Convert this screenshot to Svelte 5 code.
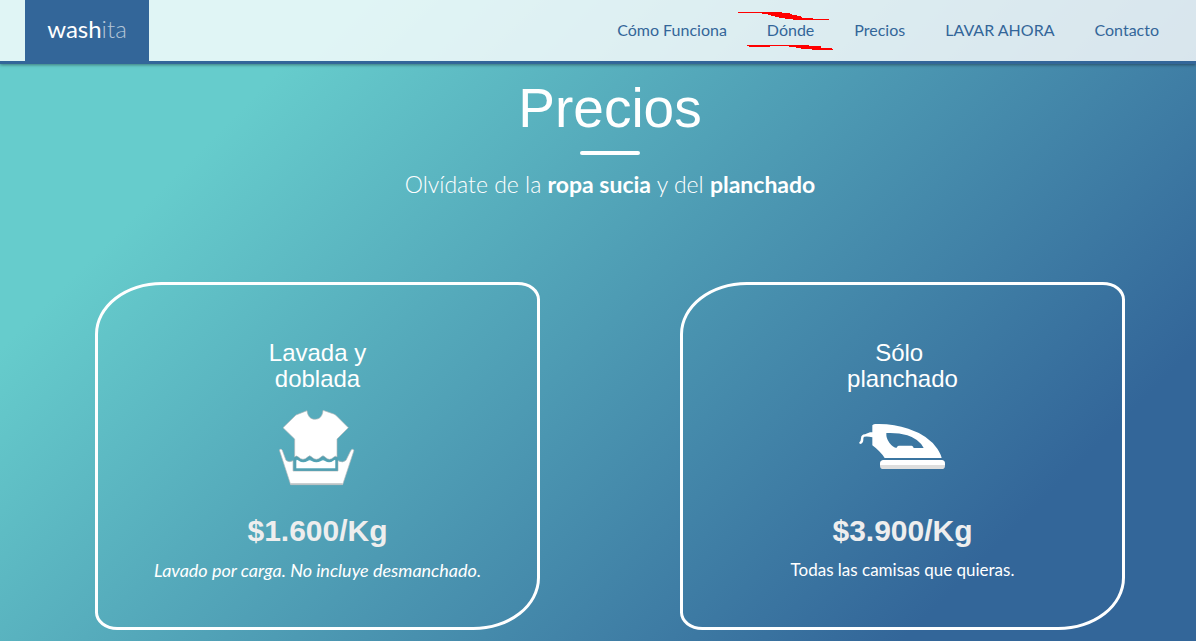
<script>
  const links = [
    { label: 'Cómo Funciona', href: '#como-funciona' },
    { label: 'Dónde', href: '#donde', marked: true },
    { label: 'Precios', href: '#precios' },
    { label: 'LAVAR AHORA', href: '#lavar' },
    { label: 'Contacto', href: '#contacto' }
  ];

  const plans = [
    { icon: 'wash', title: ['Lavada y', 'doblada'], price: '$1.600/Kg', note: 'Lavado por carga. No incluye desmanchado.', italic: true },
    { icon: 'iron', title: ['Sólo\u00a0', 'planchado'], price: '$3.900/Kg', note: 'Todas las camisas que quieras.', italic: false }
  ];
</script>

<div class="page">
  <header>
    <a class="logo" href="#inicio"><span>wash</span><span class="soft">ita</span></a>
    <nav>
      {#each links as link}
        <a href={link.href}>
          {link.label}
          {#if link.marked}
            <svg class="marks" viewBox="738 12 95 38" width="95" height="38" fill="#f00" shape-rendering="crispEdges" aria-hidden="true">
              <path d="M738 12H782V13H790V14H792V15H797V16H801V17H802V18H813V19H829V20H793V19H785V18H779V17H775V16H771V15H768V14H762V13H738Z" />
              <path d="M747 45H809V46H821V48H832V49H833V50H812V49H801V48H796V47H789V46H770V47H749V46H747Z" />
            </svg>
          {/if}
        </a>
      {/each}
    </nav>
  </header>

  <main id="precios">
    <h1>Precios</h1>
    <div class="rule"></div>
    <p class="lead">Olvídate de la <strong>ropa sucia</strong> y del <strong>planchado</strong></p>

    <div class="plans">
      {#each plans as plan}
        <section class="card">
          <h2>{plan.title[0]}<br />{plan.title[1]}</h2>
          <div class="icon">
            {#if plan.icon === 'wash'}
              <svg viewBox="54 57 231 231" width="77" height="77" aria-hidden="true">
                <g fill="#fff" stroke="#b4b8ba" stroke-width="2" stroke-linejoin="round">
                  <path d="M58 180Q63 174 67 181L78 211Q86 219 99 212V243H234V212Q248 220 258 211L272 182Q277 174 282 181L248 284H92Z" />
                  <path d="M141 62C143 78 151 88 165 88S188 78 189 61L221 72Q226 74 229 77L265 113L231 147V201Q227 196 222 201Q208 215 195 201Q189 194 183 201Q169 215 155 201Q149 194 143 201Q129 215 115 201Q109 195 104 201V147L69 113L108 75Z" />
                </g>
                <path fill="#fff" d="M109 211Q113 209 116 212Q129 221 143 213Q149 208 155 213Q169 221 183 213Q189 208 195 213Q208 221 220 212Q223 209 226 211V235H109Z" />
                <path fill="none" stroke="#549fb0" stroke-width="5" d="M105 205V240H230V205M104 206Q109 200 115 206Q129 219 143 206Q149 200 155 206Q169 219 183 206Q189 200 195 206Q208 219 222 206Q227 201 230 205" />
                <path d="M92 282H248" stroke="#b9bfc2" stroke-width="4" />
              </svg>
            {:else}
              <svg viewBox="54 69 264 147" width="88" height="49" aria-hidden="true">
                <path fill="#fff" fill-rule="evenodd" d="M97 76Q99 73 105 72Q159 70 205 86Q265 106 292 146Q303 163 305 174H134Q121 154 97 136V112L88 110Q80 109 73 110Q69 112 70 119Q70 129 61 132Q56 131 58 127Q63 123 63 115Q63 104 75 103L90 97H97ZM139 99Q138 115 148 128Q159 142 167 143H170Q171 139 176 137H215Q220 138 221 144H251Q237 117 202 106Q173 97 139 99Z" />
                <rect x="120" y="181" width="195" height="26" rx="10" fill="#dedede" />
                <path fill="#fff" d="M130 180H306Q315 182 315 195H120Q120 182 130 180Z" />
              </svg>
            {/if}
          </div>
          <p class="price">{plan.price}</p>
          <p class="note" class:italic={plan.italic}>{plan.note}</p>
        </section>
      {/each}
    </div>
  </main>
</div>

<style>
  :global(body) {
    margin: 0;
  }

  .page {
    box-sizing: border-box;
    min-height: 100vh;
    background: linear-gradient(135deg, #66cccc 19%, #336699 84%);
    color: #fff;
    font-family: Lato, 'Open Sans', sans-serif;
  }

  header {
    display: flex;
    align-items: stretch;
    justify-content: space-between;
    height: 61px;
    padding: 0 17px 0 25px;
    background: rgba(255, 255, 255, 0.8);
    background-clip: padding-box;
    border-bottom: 3px solid #336699;
    box-shadow: 0 1px 3px rgba(0, 0, 0, 0.4);
  }

  a {
    color: #336699;
    text-decoration: none;
  }

  .logo {
    display: flex;
    align-items: center;
    justify-content: center;
    width: 124px;
    padding-bottom: 4px;
    box-sizing: border-box;
    background: #336699;
    color: #fff;
    font-size: 24px;
  }

  .soft {
    color: #b4c5d7;
    font-weight: 300;
  }

  nav {
    display: flex;
    align-items: center;
    padding-bottom: 2px;
  }

  nav a {
    position: relative;
    padding: 0 20px;
    font-size: 16px;
    line-height: 20px;
  }

  .marks {
    position: absolute;
    top: -8px;
    left: -9px;
  }

  main {
    padding: 13px 1px 11px 25px;
    text-align: center;
  }

  h1,
  h2,
  .price {
    margin: 0;
    font-family: 'Liberation Sans', Arial, sans-serif;
  }

  h1 {
    font-size: 55px;
    font-weight: 400;
    line-height: 62px;
  }

  .rule {
    width: 60px;
    height: 4px;
    margin: 12px auto 16px;
    border-radius: 2px;
    background: #fff;
  }

  .lead {
    margin: 0;
    font-size: 23px;
    font-weight: 300;
    line-height: 26px;
  }

  .lead strong {
    font-weight: 700;
  }

  .plans {
    display: grid;
    grid-template-columns: 1fr 1fr;
    gap: 140px;
    padding: 85px 70px 0;
  }

  .card {
    padding: 55px 20px 45px;
    border: 3px solid #fff;
    border-radius: 15% 5%;
  }

  h2 {
    font-size: 24px;
    font-weight: 400;
    line-height: 26px;
  }

  .icon {
    display: flex;
    align-items: center;
    justify-content: center;
    height: 110px;
    padding: 0 2px 2px 0;
  }

  .price {
    color: #eee;
    font-size: 30px;
    font-weight: 700;
    line-height: 54px;
  }

  .note {
    margin: 0;
    font-size: 17px;
    line-height: 24px;
  }

  .italic {
    font-size: 18px;
    font-style: italic;
  }
</style>
